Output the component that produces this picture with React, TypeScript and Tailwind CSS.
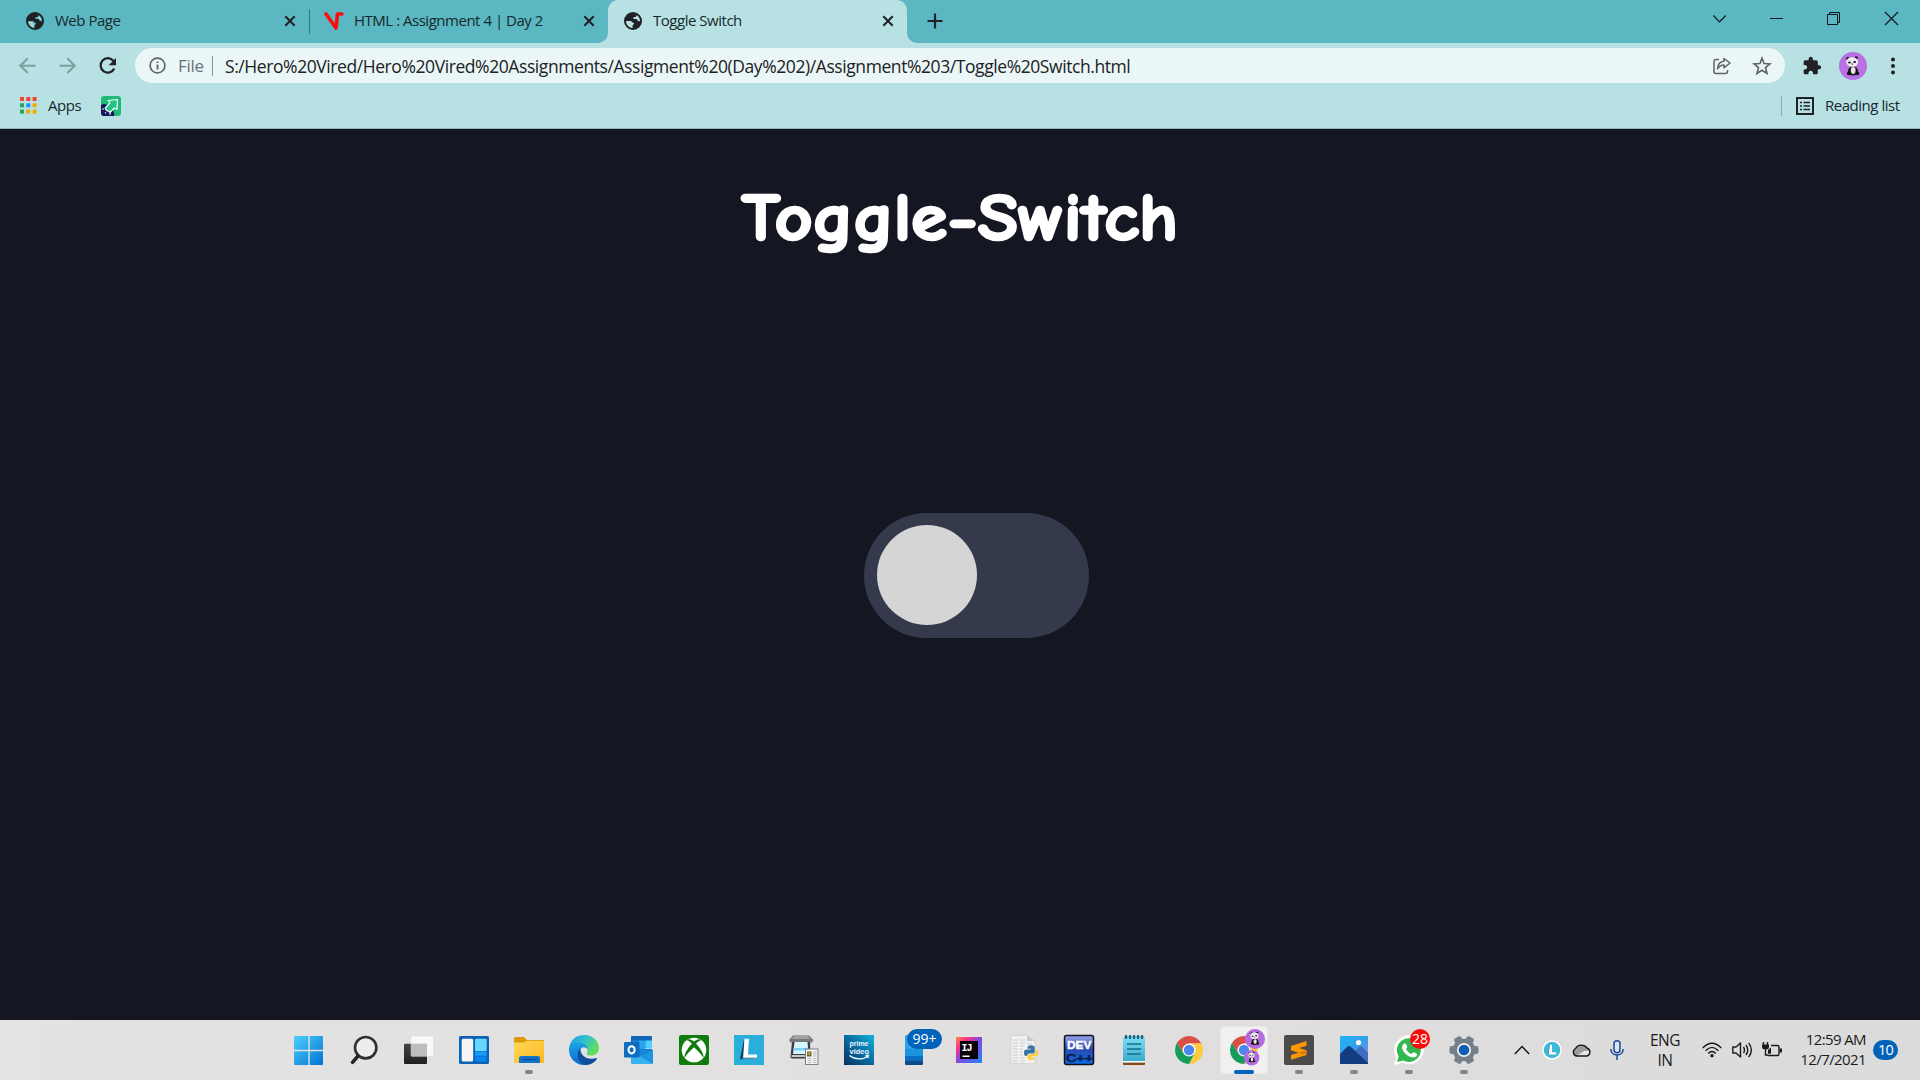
import React from "react";

type Kids = { children: React.ReactNode };

function Globe() {
  return (
    <svg width="18" height="18" viewBox="0 0 18 18" className="shrink-0">
      <circle cx="9" cy="9" r="8" fill="none" stroke="#202124" strokeWidth="2" />
      <path d="M9 1.500 C4 2 1 5 1.500 9 H6 C8.500 9 8 11 10 11 C10.500 12.500 8 12.500 8.500 15 L9.500 17 C14 16 17 13 16.500 9.500 L14 9 L12.500 7 H9.500 V5 H12 L13 2.500 Z" fill="#202124" />
      <path d="M2.500 10 H6 L8 12 V15.800 C5 15 3 13 2.500 10 Z M12.500 4 L15 6.200 L15.600 8 L13 7 L12 5.500 Z" fill="#b8e1e4" fillOpacity=".75" />
    </svg>
  );
}

function TabClose() {
  return (
    <svg width="12" height="12" viewBox="0 0 12 12" className="shrink-0">
      <path d="M1.300 1.300 L10.700 10.700 M10.700 1.300 L1.300 10.700" stroke="#202124" strokeWidth="2" />
    </svg>
  );
}

function PandaShapes() {
  return (
    <g>
      <ellipse cx="14" cy="19" rx="5" ry="4.500" fill="#16141a" />
      <ellipse cx="9.800" cy="21.500" rx="2" ry="1.700" fill="#16141a" />
      <ellipse cx="18.300" cy="21.500" rx="2" ry="1.700" fill="#16141a" />
      <ellipse cx="14.200" cy="18.500" rx="2.400" ry="3.400" fill="#e8e4e8" />
      <circle cx="8.800" cy="6.700" r="1.700" fill="#16141a" />
      <circle cx="17.200" cy="5.900" r="1.700" fill="#16141a" />
      <ellipse cx="13.200" cy="10" rx="6" ry="4.800" fill="#eeeaf0" />
      <ellipse cx="10.500" cy="10.500" rx="1.400" ry="1" fill="#16141a" />
      <ellipse cx="15.700" cy="9.900" rx="1.400" ry="1" fill="#16141a" />
      <circle cx="13.200" cy="12" r=".7" fill="#16141a" />
    </g>
  );
}

function ChromeShapes() {
  return (
    <g>
      <path d="M28 23.500 H40.400 L40.120 23 A14 14 0 0 0 15.880 23 L22.300 33.500 Z" fill="#d94f43" />
      <path d="M33.600 33.200 L28 44 A14 14 0 0 0 40.400 23.500 H28 Z" fill="#fdcb3e" />
      <path d="M22.300 33.300 L15.880 23 A14 14 0 0 0 28 44 L33.600 33.300 Z" fill="#159c5b" />
      <circle cx="28" cy="30" r="6.500" fill="#fff" />
      <circle cx="28" cy="30" r="5.200" fill="#4a86ee" />
    </g>
  );
}

function TaskIcon({ children, running, active }: { children: React.ReactNode; running?: boolean; active?: boolean }) {
  return (
    <div className="h-[60px] w-[55px] shrink-0">
      <svg width="60" height="60" viewBox="0 0 60 60" className="block max-w-none overflow-visible">
        {active && <rect x="4" y="6" width="48" height="48" rx="5" fill="#f1efef" stroke="#e5e1e1" />}
        {children}
        {running && <rect x="24" y="50" width="8" height="4" rx="2" fill="#858383" />}
        {active && <rect x="18" y="50" width="20" height="4" rx="2" fill="#0063b9" />}
      </svg>
    </div>
  );
}

const gearTeeth = [0, 60, 120, 180, 240, 300];
const notepadRings = [20, 24, 28, 32, 36];

function Gradients() {
  return (
    <svg width="0" height="0" className="absolute">
      <defs>
        <linearGradient id="win" x1="0" y1="0" x2="1" y2="1"><stop offset="0" stopColor="#4fd0fb" /><stop offset="1" stopColor="#0072d2" /></linearGradient>
        <linearGradient id="folder" x1="0" y1="0" x2="1" y2="1"><stop offset="0" stopColor="#ffd75e" /><stop offset="1" stopColor="#fcb91b" /></linearGradient>
        <linearGradient id="edgeTop" x1="0" y1="0" x2="1" y2=".5"><stop offset="0" stopColor="#1c9be0" /><stop offset=".5" stopColor="#2fbfd0" /><stop offset="1" stopColor="#62e058" /></linearGradient>
        <linearGradient id="edgeLow" x1="0" y1="0" x2="0" y2="1"><stop offset="0" stopColor="#1ea3e6" /><stop offset="1" stopColor="#0b6bc9" /></linearGradient>
        <linearGradient id="prime" x1="0" y1="1" x2="1" y2="0"><stop offset="0" stopColor="#07305f" /><stop offset=".6" stopColor="#0a78ab" /><stop offset="1" stopColor="#12b5dd" /></linearGradient>
        <linearGradient id="ij" x1="0" y1="0" x2="1" y2="1"><stop offset="0" stopColor="#fd8a3c" /><stop offset=".25" stopColor="#f9318a" /><stop offset=".5" stopColor="#7d4be0" /><stop offset="1" stopColor="#1f87fa" /></linearGradient>
        <linearGradient id="dev" x1="0" y1="0" x2="0" y2="1"><stop offset="0" stopColor="#9aa8ea" /><stop offset=".45" stopColor="#2b48b0" /><stop offset="1" stopColor="#0b6fe8" /></linearGradient>
        <linearGradient id="note" x1="0" y1="0" x2="0" y2="1"><stop offset="0" stopColor="#7edcef" /><stop offset="1" stopColor="#38a9cf" /></linearGradient>
        <linearGradient id="photo" x1="0" y1="0" x2="1" y2="1"><stop offset="0" stopColor="#1fb3f3" /><stop offset=".5" stopColor="#34a0ec" /><stop offset="1" stopColor="#a77ce0" /></linearGradient>
        <linearGradient id="dark" x1="0" y1="0" x2="0" y2="1"><stop offset="0" stopColor="#454545" /><stop offset="1" stopColor="#1f1f1f" /></linearGradient>
      </defs>
    </svg>
  );
}

function Taskbar() {
  return (
    <footer className="flex h-[60px] w-full shrink-0 items-center bg-gradient-to-r from-[#e3e3e3] via-[#e2dfdf] to-[#dbdbdb] pl-[281px] font-['Open_Sans',sans-serif] text-[#1b1b1b]">
      <TaskIcon>
        <path d="M14 16 H27.300 V29.800 H13 V17 Q13 16 14 16 Z M28.700 16 H41 Q42 16 42 17 V29.800 H28.700 Z M13 31.200 H27.300 V45 H14 Q13 45 13 44 Z M28.700 31.200 H42 V44 Q42 45 41 45 H28.700 Z" fill="url(#win)" />
      </TaskIcon>
      <TaskIcon>
        <circle cx="29.700" cy="27.700" r="10.700" fill="#ededed" stroke="#303030" strokeWidth="2.600" />
        <path d="M22 36 L16.500 42.300" stroke="#252525" strokeWidth="3.500" strokeLinecap="round" />
      </TaskIcon>
      <TaskIcon>
        <rect x="13" y="23.700" width="23" height="20.300" rx="1" fill="url(#dark)" />
        <rect x="20" y="16" width="22.500" height="20.200" rx="1" fill="#f8f8f8" stroke="#d8d8d8" strokeWidth=".5" />
        <rect x="20" y="23.700" width="16" height="12.500" fill="#bdbdbd" />
      </TaskIcon>
      <TaskIcon>
        <rect x="13" y="16" width="30" height="28" rx="1.500" fill="#0c62b5" />
        <rect x="15.700" y="18.700" width="11.500" height="22.800" rx="1.500" fill="#f4f4f4" />
        <rect x="29" y="18.700" width="11.700" height="12.300" rx="1" fill="#66d7ff" />
        <rect x="29" y="31.500" width="11.700" height="4.300" fill="#189cf5" />
        <rect x="29" y="36.300" width="11.700" height="5.200" rx="1" fill="#0a85ea" />
      </TaskIcon>
      <TaskIcon running>
        <path d="M13 18 Q13 17 14 17 H23 L26 20 H43 V26 H13 Z" fill="#dc9a06" />
        <path d="M13 22.500 H23 L26 20.700 H43 V42 Q43 43 42 43 H14 Q13 43 13 42 Z" fill="url(#folder)" />
        <path d="M18 43 V38 Q18 36 20 36 H37 Q39 36 39 38 V43 Z" fill="#1173c8" />
        <path d="M22 39.500 H35.500" stroke="#0a4c8f" strokeWidth="1.300" />
      </TaskIcon>
      <TaskIcon>
        <path d="M13 29 C14 20 20 15 28 15 C37 15 43 21 43 28 C43 33 39 35.500 35 35.500 C32 35.500 30 34.500 31 33 C32.500 30.500 31 26 26.500 24 C21 21.500 15 24 13 29 Z" fill="url(#edgeTop)" />
        <path d="M13 30 C13 25 17 22.200 22 22.200 C28 22.200 32 26 31.800 30 C31 27.500 27 26 24.500 29 C21.500 33 24.500 42.500 32 44.500 C22 47.500 13 39 13 30 Z" fill="url(#edgeLow)" />
        <path d="M24.500 28.500 C20 31 20.500 44 30 45 C35 45 39.500 42 41 38.500 C41 37 38 38.700 35 38.700 C29 38.700 24 34 24.500 28.500 Z" fill="#0d4f9c" />
      </TaskIcon>
      <TaskIcon>
        <path d="M20 17 Q20 16 21 16 H40 Q41 16 41 17 V28 H20 Z" fill="#1066b5" />
        <rect x="21" y="20.500" width="7" height="11" fill="#1684d8" />
        <rect x="28" y="20.500" width="6.500" height="9" fill="#2ba5ec" />
        <rect x="34.500" y="20.500" width="6.500" height="8" fill="#50d0ff" />
        <path d="M20 29 H41 L42 31 V42.500 Q42 44 40.500 44 H22 Q20 44 20 42 Z" fill="#1684d8" />
        <path d="M20 31 L42 43.500 Q41.500 44 40.500 44 H22 Q20 44 20 42 Z" fill="#35b2f2" />
        <path d="M29 36 L42 30.500 V42 Z" fill="#1f94e0" />
        <rect x="13" y="22" width="15.500" height="15.500" rx="1.300" fill="#0f6cbd" />
        <ellipse cx="20.600" cy="29.800" rx="3.100" ry="3.600" fill="none" stroke="#fff" strokeWidth="2" />
      </TaskIcon>
      <TaskIcon>
        <rect x="13" y="15" width="30" height="30" rx="2" fill="#107c10" />
        <circle cx="28" cy="30" r="12.300" fill="#fff" />
        <path d="M20.500 20.200 C23 18 26 20 28 21.400 C30 20 33 18 35.500 20.200 C34 20 31.500 22 30 23.700 C34 27.500 38 34 37.600 38 C35 34 31.500 30.500 28 27.300 C24.500 30.500 21 34 18.400 38 C18 34 22 27.500 26 23.700 C24.500 22 22 20 20.500 20.200 Z" fill="#107c10" />
      </TaskIcon>
      <TaskIcon>
        <rect x="13" y="15" width="30" height="30" fill="#2aafda" />
        <path d="M23 19 L19 39.500 L24 37 Z" fill="#0d3b70" />
        <path d="M23.500 18.800 H28 L27 34.500 H36 V38.500 H22 Z" fill="#fff" />
        <path d="M19 39.500 L22 37.500 H36 L35.500 38.800 Z" fill="#0d3b70" fillOpacity=".5" />
      </TaskIcon>
      <TaskIcon>
        <path d="M17 15.500 H33 L37.500 20 L36 22.500 H14.500 L13 20 Z" fill="#77797a" />
        <path d="M18.500 15.500 H31.500 L34 19 H16 Z" fill="#a2a2a2" />
        <path d="M16 22 H34 L34.500 36.500 Q34.500 38.500 33 38.500 H16 Q14.300 38.500 14.500 36.500 Z" fill="#3a3e41" />
        <path d="M18.500 22 H31.500 L32.500 34 H17 Z" fill="#d6f6ff" />
        <path d="M17.500 28 H32 V30.500 H17.500 Z" fill="#7fd4f2" />
        <path d="M15.500 35 H34 V37 H15.500 Z" fill="#c6c9cb" />
        <rect x="29.500" y="29" width="12.500" height="15.500" fill="#f4f4f1" stroke="#74828c" />
        <rect x="31" y="31.500" width="4.500" height="5" fill="#416e35" />
        <circle cx="33" cy="33.500" r="1.700" fill="#e17b22" />
        <path d="M37 32 H40.500 M37 34 H40.500 M37 36 H40.500 M31.500 38.500 H35.500 M37 38.500 H40.500 M31.500 40.500 H35.500 M37 40.500 H40.500 M31.500 42.500 H35.500 M37 42.500 H40.500" stroke="#b9b9b9" />
      </TaskIcon>
      <TaskIcon>
        <rect x="13" y="15" width="30" height="30" fill="url(#prime)" />
        <g fontFamily="Liberation Sans, sans-serif" fontSize="6.800" fontWeight="700" fill="#e9f7ff">
          <text x="18.500" y="25.500" textLength="19" lengthAdjust="spacingAndGlyphs">prime</text>
          <text x="18.500" y="33.500" textLength="19.500" lengthAdjust="spacingAndGlyphs">video</text>
        </g>
        <path d="M18.500 35.500 C24 40 32 40 37 36 M34.500 35.500 L37.500 35.300 L36.800 38" fill="none" stroke="#e9f7ff" strokeWidth="1.300" />
      </TaskIcon>
      <TaskIcon>
        <rect x="19" y="15" width="18" height="30" rx="1.500" fill="#2aa6e6" />
        <rect x="19" y="29" width="18" height="7" fill="#1c93dd" />
        <rect x="19" y="36" width="18" height="4.500" fill="#0a6fc4" />
        <path d="M19 40.500 H37 V43.500 Q37 45 35.500 45 H20.500 Q19 45 19 43.500 Z" fill="#0b4a86" />
        <rect x="21" y="9" width="35" height="20" rx="10" fill="#0063b9" />
        <text x="38.500" y="24" textAnchor="middle" fontSize="14" fill="#fff" textLength="24" lengthAdjust="spacingAndGlyphs">99+</text>
      </TaskIcon>
      <TaskIcon>
        <rect x="15" y="17" width="26" height="26" fill="url(#ij)" />
        <rect x="19" y="21" width="18" height="18" fill="#08020a" />
        <text x="20.500" y="30.500" fontSize="10" fontWeight="700" fill="#fff" fontFamily="Liberation Mono, monospace" textLength="11">IJ</text>
        <rect x="21.500" y="35.500" width="7" height="1.500" fill="#fff" />
      </TaskIcon>
      <TaskIcon>
        <path d="M15 15.500 H31 L39 21 V44 L15 43 Z" fill="#f1f1f1" stroke="#d2d2d2" />
        <path d="M31 15.500 V21 H39 Z" fill="#c9c9c9" />
        <path d="M17 20 H22 M24 20 H29 M17 23 H22 M24 23 H29 M31 24 H36 M17 26 H22 M24 26 H28 M17 29 H22 M24 29 H27 M17 32 H22 M24 32 H26 M17 35 H22 M24 35 H27 M17 38 H22 M24 38 H29 M17 41 H22 M24 41 H29" stroke="#cbcbcb" />
        <path d="M31.500 28 Q31.500 25.300 35 25.300 Q38.700 25.300 38.700 28 V32 Q38.700 33.500 37 33.500 H33 Q31 33.500 31 36 H30 Q28 36 28 32.500 Q28 29.500 30.500 29.500 H35 V28.800 H31.500 Z" fill="#3672a4" />
        <path d="M38.500 37.500 Q38.500 40.300 35 40.300 Q31.500 40.300 31.500 37.500 V35.500 Q31.500 34.300 33 34.300 H37 Q39.500 34.300 39.500 31.500 V30 H40.500 Q42.500 30.500 42.300 33.500 Q42.300 36.300 40 36.300 H35.500 V37.500 Z" fill="#fdd03b" />
      </TaskIcon>
      <TaskIcon>
        <rect x="13.500" y="15.500" width="29" height="29" rx="2" fill="url(#dev)" stroke="#10131f" strokeWidth="1.500" />
        <g fontFamily="Liberation Sans, sans-serif" fontSize="11.400" fontWeight="700">
          <text x="16" y="28.500" fill="#fff" stroke="#fff" strokeWidth=".4" textLength="24.500" lengthAdjust="spacingAndGlyphs">DEV</text>
          <text x="15" y="41.700" fill="#0b2352" stroke="#0b2352" strokeWidth=".6" textLength="27" lengthAdjust="spacingAndGlyphs">C++</text>
        </g>
      </TaskIcon>
      <TaskIcon>
        <path d="M17 42 H39 V44 Q39 45 38 45 H18 Q17 45 17 44 Z" fill="#8b4a12" />
        <rect x="17" y="17" width="22" height="25.500" rx="1" fill="url(#note)" />
        <rect x="17" y="41" width="22" height="1.500" fill="#fff" />
        {notepadRings.map((x) => (
          <rect key={x} x={x - 1.2} y="15" width="2.500" height="4" rx="1.200" fill="#0e5f7e" />
        ))}
        <path d="M21 24 H35 M21 29 H35 M21 34 H35" stroke="#10708f" strokeWidth="1.700" />
      </TaskIcon>
      <TaskIcon><ChromeShapes /></TaskIcon>
      <TaskIcon active>
        <ChromeShapes />
        <circle cx="39" cy="19" r="10" fill="#b36be0" />
        <g transform="translate(29.500 9) scale(.68)"><PandaShapes /></g>
        <circle cx="35.700" cy="37.700" r="7.700" fill="#b36be0" />
        <g transform="translate(28.500 29.800) scale(.53)"><PandaShapes /></g>
      </TaskIcon>
      <TaskIcon running>
        <rect x="13" y="15" width="30" height="30" rx="2" fill="#4b4b4b" />
        <path d="M20 26 L35.500 21 V25.700 L28 28 L35.500 30.300 V35 L20 39.700 V35 L27.500 32.700 L20 30.300 Z" fill="#ff9800" />
        <path d="M27.500 32.700 L35.500 30.300 V33 L31 34.500 Z" fill="#d97b06" />
      </TaskIcon>
      <TaskIcon running>
        <rect x="14" y="16" width="28" height="28" rx="1" fill="url(#photo)" />
        <path d="M28 32 L33 27 Q34.500 25.500 36 27 L42 33 V44 H31 Z" fill="#3f6dc1" />
        <path d="M14 34 L21.500 26.500 Q23 25.300 24.500 26.500 L42 43 V44 H14 Z" fill="#123d80" />
        <circle cx="32.500" cy="22.500" r="2.600" fill="#fff" />
      </TaskIcon>
      <TaskIcon running>
        <path d="M13 45 L15.200 37 A14.800 14.500 0 1 1 21.500 42.800 Z" fill="#fff" />
        <path d="M16 42 L17.700 36.500 A12 11.900 0 1 1 22 40.500 Z" fill="#33b850" />
        <path d="M22.500 24 Q24 22.500 25 24 L26.300 27 Q26.300 28 25 29 Q27 33 30.500 34 Q32 32 33 32.300 L36 34 Q36.500 37 32.500 37.500 C27 37.500 20.500 31 21 26.500 Z" fill="#fff" />
        <circle cx="39" cy="19" r="10" fill="#fb0a0a" />
        <text x="39" y="24.300" textAnchor="middle" fontSize="14" fill="#fff" textLength="16" lengthAdjust="spacingAndGlyphs">28</text>
      </TaskIcon>
      <TaskIcon running>
        {gearTeeth.map((a) => (
          <rect key={a} x="24" y="15.500" width="8" height="10" rx="2.200" fill="#76808a" transform={`rotate(${a + 30} 28 30)`} />
        ))}
        <circle cx="28" cy="30" r="11.300" fill="#76808a" />
        <circle cx="28" cy="30" r="7" fill="#f2f2f2" />
        <circle cx="28" cy="30" r="5.300" fill="#0d5fb4" />
      </TaskIcon>

      <div className="ml-[23px] flex h-full items-center">
        <svg width="16" height="10" viewBox="0 0 16 10"><path d="M.8 9 L8 1.500 L15.200 9" fill="none" stroke="#1b1b1b" strokeWidth="1.500" /></svg>
        <svg width="20" height="20" viewBox="0 0 20 20" className="ml-[12px]">
          <circle cx="10" cy="10" r="9" fill="#3fb9d8" stroke="#fff" strokeWidth="1.500" />
          <path d="M8 4.500 L6 14.500 L9 14 Z" fill="#0e4f8a" />
          <path d="M8 4.800 H10 V12.300 H14 V14.500 H6.500 Z" fill="#fff" />
        </svg>
        <svg width="20" height="16" viewBox="0 0 20 16" className="ml-[10px]">
          <path d="M5 14 A4 4 0 0 1 3.500 6.500 A6.500 5.800 0 0 1 15 6 A4.200 4.200 0 0 1 15 14 Z" fill="#9b9b9b" />
          <path d="M4.500 14 L12 9 L18 8.500 Q19.500 13.500 15 14 Z" fill="#e5e5e5" />
          <path d="M5 14 A4 4 0 0 1 3.500 6.500 A6.500 5.800 0 0 1 15 6 A4.200 4.200 0 0 1 15 14 Z" fill="none" stroke="#1b1b1b" strokeWidth="1.400" />
        </svg>
        <svg width="14" height="20" viewBox="0 0 14 20" className="ml-[18px]">
          <rect x="4" y=".8" width="6" height="12" rx="3" fill="#d7e3f3" stroke="#1b4a96" strokeWidth="1.500" />
          <path d="M.8 9 C.8 17 13.200 17 13.200 9 M7 15 V20" fill="none" stroke="#1b4a96" strokeWidth="1.500" />
        </svg>
        <div className="mb-px ml-[17px] flex w-[48px] flex-col items-center text-[15.500px] leading-5 tracking-[-0.6px]">
          <span>ENG</span>
          <span>IN</span>
        </div>
        <svg width="20" height="16" viewBox="0 0 20 16" className="ml-[13px]">
          <path d="M.7 6 Q10 -3.500 19.300 6 M3.600 8.800 Q10 2 16.400 8.800 M6.300 11.500 Q10 7.500 13.700 11.500" fill="none" stroke="#1b1b1b" strokeWidth="1.400" />
          <circle cx="10" cy="13.800" r="1.700" fill="#1b1b1b" />
        </svg>
        <svg width="21" height="18" viewBox="0 0 21 18" className="ml-[10px]">
          <path d="M.8 6 H4 L8.500 2 V16 L4 12 H.8 Z M11.500 6 Q13.500 9 11.500 12 M14 4 Q17.500 9 14 14 M16.700 1.800 Q22 9 16.700 16.200" fill="none" stroke="#1b1b1b" strokeWidth="1.400" strokeLinejoin="round" />
        </svg>
        <svg width="20" height="18" viewBox="0 0 20 18" className="ml-[9px]">
          <path d="M1.500 1 V4 M5.500 1 V4 M3.500 7 V14 H6" fill="none" stroke="#1b1b1b" strokeWidth="1.400" />
          <path d="M0 3.500 H7 V6 Q7 8.500 3.500 8.500 Q0 8.500 0 6 Z" fill="#1b1b1b" />
          <path d="M9 4.500 H15.500 Q17 4.500 17 6 V13 Q17 14.500 15.500 14.500 H5.500" fill="none" stroke="#1b1b1b" strokeWidth="1.400" />
          <path d="M6 9 L9 6.500 V12.700 H6 Z" fill="#1b1b1b" />
          <path d="M17.500 7.500 H20 V11.500 H17.500 Z" fill="#1b1b1b" />
        </svg>
        <div className="mb-[2px] ml-[10px] flex w-[74px] flex-col items-end whitespace-nowrap text-[15px] leading-5 tracking-[-0.6px]">
          <span>12:59 AM</span>
          <span>12/7/2021</span>
        </div>
        <div className="ml-[7px] flex h-5 w-[25px] items-center justify-center rounded-full bg-[#0063b9] text-[14.500px] leading-5 tracking-[-0.8px] text-white">10</div>
      </div>
    </footer>
  );
}

function Label({ children }: Kids) {
  return <span className="block whitespace-nowrap pb-[2px] text-[15px] leading-5 tracking-[-0.48px] text-[#16292c]">{children}</span>;
}

function TabStrip() {
  return (
    <div className="flex h-[43px] w-full bg-[#5bb7c1]">
      <div className="flex w-[309px] items-center pb-px pl-[26px] pr-[13px]">
        <Globe />
        <div className="ml-[11px] flex-1"><Label>Web Page</Label></div>
        <TabClose />
      </div>
      <div className="mt-[9px] h-[25px] w-px bg-[#33757d]" />
      <div className="flex w-[298px] items-center pb-px pl-[14px] pr-[13px]">
        <svg width="20" height="18" viewBox="0 0 20 18" className="shrink-0">
          <path d="M2 2 L12 16 L13.500 2 H18" fill="none" stroke="#fb0d0d" strokeWidth="3.600" strokeLinecap="round" strokeLinejoin="round" />
        </svg>
        <div className="ml-[10px] flex-1"><Label>HTML : Assignment 4 | Day 2</Label></div>
        <TabClose />
      </div>
      <div className="relative flex w-[299px] items-center rounded-t-[10px] bg-[#b8e1e4] pb-px pl-[16px] pr-[13px]">
        <svg width="10" height="10" viewBox="0 0 10 10" className="absolute -left-[10px] bottom-0"><path d="M10 0 V10 H0 A10 10 0 0 0 10 0 Z" fill="#b8e1e4" /></svg>
        <svg width="10" height="10" viewBox="0 0 10 10" className="absolute -right-[10px] bottom-0"><path d="M0 0 V10 H10 A10 10 0 0 1 0 0 Z" fill="#b8e1e4" /></svg>
        <Globe />
        <div className="ml-[11px] flex-1"><Label>Toggle Switch</Label></div>
        <TabClose />
      </div>
      <svg width="16" height="16" viewBox="0 0 16 16" className="ml-[20px] mt-[13px]">
        <path d="M8 .5 V15.500 M.5 8 H15.500" stroke="#202124" strokeWidth="2.200" />
      </svg>
      <svg width="200" height="16" viewBox="1713 11 200 16" className="ml-auto mr-[7px] mt-[11px]" fill="none" stroke="#101718">
        <path d="M1713.300 15.500 L1719.500 21.800 L1725.700 15.500" strokeWidth="1.200" />
        <path d="M1770 18.500 H1783" />
        <path d="M1827.500 14.500 H1837.500 V24.500 H1827.500 Z M1829.500 14.500 V12.500 H1839.500 V22.500 H1837.500" />
        <path d="M1885 12 L1898 25 M1898 12 L1885 25" strokeWidth="1.200" />
      </svg>
    </div>
  );
}

function Toolbar() {
  return (
    <div className="flex h-[45px] w-full items-center bg-[#b8e1e4]">
      <svg width="100" height="20" viewBox="18 55 100 20" className="ml-[18px] shrink-0" fill="none">
        <path d="M35.500 64.700 H20.500 M27.800 57.300 L20.300 64.700 L27.800 72" stroke="#7f9ea1" strokeWidth="2" />
        <path d="M59.500 64.700 H74.500 M67.300 57.300 L74.800 64.700 L67.300 72" stroke="#7f9ea1" strokeWidth="2" />
        <path d="M113.500 60 A7.200 7.200 0 1 0 114.300 67.500" stroke="#202124" strokeWidth="2.200" />
        <path d="M116 57 V64.300 H108.700 Z" fill="#202124" />
      </svg>
      <div className="ml-[17px] flex h-[35px] w-[1650px] shrink-0 items-center rounded-full bg-[#ebf7f7] pl-[14px] pr-[12px]">
        <svg width="17" height="17" viewBox="0 0 17 17">
          <circle cx="8.500" cy="8.500" r="7.400" fill="none" stroke="#5f6568" strokeWidth="1.700" />
          <path d="M8.500 7.500 V12.500 M8.500 4.400 V6.100" stroke="#5f6568" strokeWidth="1.800" />
        </svg>
        <span className="ml-[12px] w-[26px] whitespace-nowrap text-[17px] leading-6 tracking-[-0.3px] text-[#66707a]">File</span>
        <div className="ml-[8px] h-5 w-px bg-[#8b9496]" />
        <span className="ml-[12px] flex-1 whitespace-nowrap text-[17.500px] leading-6 tracking-[-0.42px] text-[#202124]">
          S:/Hero%20Vired/Hero%20Vired%20Assignments/Assigment%20(Day%202)/Assignment%203/Toggle%20Switch.html
        </span>
        <svg width="18" height="18" viewBox="0 0 18 18" fill="none" stroke="#5f6568" strokeWidth="1.500">
          <path d="M6 2.500 H3 Q1 2.500 1 4.500 V14.500 Q1 16.500 3 16.500 H12.500 Q14.500 16.500 14.500 14.500 V13" />
          <path d="M11 1.500 L17 6 L11 10.800 V8 Q7 8 4.500 11.800 Q5 4.800 11 4.300 Z" strokeLinejoin="round" />
        </svg>
        <svg width="20" height="20" viewBox="0 0 24 24" className="ml-[21px] mr-px">
          <path d="M12 2.800 L14.500 9 L21.500 9.500 L16.200 14 L18 21 L12 17.200 L6 21 L7.800 14 L2.500 9.500 L9.500 9 Z" fill="none" stroke="#5f6568" strokeWidth="2" />
        </svg>
      </div>
      <svg width="20" height="20" viewBox="0 0 24 24" className="ml-[17px] shrink-0">
        <path d="M20.500 11 H19 V7 c0-1.100-.9-2-2-2 h-4 V3.500 C13 2.120 11.880 1 10.500 1 S8 2.120 8 3.500 V5 H4 c-1.100 0-2 .9-2 2 v3.800 h1.500 c1.490 0 2.700 1.210 2.700 2.700 s-1.210 2.700-2.700 2.700 H2 V20 c0 1.100.9 2 2 2 h3.800 v-1.500 c0-1.490 1.210-2.700 2.700-2.700 s2.700 1.210 2.700 2.700 V22 H17 c1.100 0 2-.9 2-2 v-4 h1.500 c1.380 0 2.500-1.120 2.500-2.500 S21.880 11 20.500 11 z" fill="#202124" />
      </svg>
      <svg width="28" height="28" viewBox="0 0 28 28" className="ml-[17px] shrink-0">
        <circle cx="14" cy="14" r="14" fill="#b870e2" />
        <PandaShapes />
      </svg>
      <svg width="6" height="18" viewBox="0 0 6 18" className="ml-[23px] shrink-0" fill="#202124">
        <circle cx="3" cy="2.500" r="2" /><circle cx="3" cy="9" r="2" /><circle cx="3" cy="15.500" r="2" />
      </svg>
    </div>
  );
}

const appDots = [
  ["#f04438", "#f04438", "#f04438"],
  ["#26a65b", "#2391f5", "#f5a800"],
  ["#26a65b", "#f5a800", "#f5a800"],
];

function Bookmarks() {
  return (
    <div className="flex h-[41px] w-full items-center border-b border-[#8fb4b7] bg-[#b8e1e4] pb-[5px] pl-[20px] pr-[18px]">
      <svg width="17" height="17" viewBox="0 0 17 17">
        {appDots.map((row, r) => row.map((c, i) => <rect key={`${r}-${i}`} x={i * 6.3} y={r * 6.3} width="4" height="4" fill={c} />))}
      </svg>
      <div className="ml-[11px] w-[53px]"><Label>Apps</Label></div>
      <svg width="20" height="20" viewBox="0 0 20 20">
        <rect width="20" height="20" rx="3" fill="#1fb978" />
        <path d="M0 9 Q4 6 9 11 Q14 15 13 20 H3 Q0 20 0 17 Z" fill="#17145c" />
        <path d="M7 4.500 L16.500 3.500 L16 13.500 L13.300 12 L9 16.500 L7.500 15 Q5 15 4.200 12 L9 7 Z" fill="#20c486" stroke="#f2fffa" strokeWidth="1.200" strokeLinejoin="round" />
        <path d="M2 12 V14 M4 16 L5 17.500 M8 18 H10" stroke="#fff" />
      </svg>
      <div className="ml-auto mr-[14px] h-5 w-px bg-[#86abb0]" />
      <svg width="18" height="18" viewBox="0 0 18 18" className="mr-[11px]">
        <rect x="1" y="1" width="16" height="16" fill="none" stroke="#202124" strokeWidth="2" />
        <path d="M4 5.500 H6 M4 9 H6 M4 12.500 H6 M7.500 5.500 H14 M7.500 9 H14 M7.500 12.500 H14" stroke="#202124" strokeWidth="1.700" />
      </svg>
      <div className="w-[77px]"><Label>Reading list</Label></div>
    </div>
  );
}

export default function App() {
  return (
    <div className="flex h-[1080px] w-[1920px] flex-col overflow-hidden bg-[#141622] font-['Open_Sans',sans-serif]">
      <Gradients />
      <TabStrip />
      <Toolbar />
      <Bookmarks />
      <main className="flex flex-1 flex-col items-center">
        <h1 className="mt-[45px] scale-x-[1.12] whitespace-nowrap font-['Comic_Sans_MS','Comic_Neue',cursive] text-[66px] font-bold leading-[90px] text-white [-webkit-text-stroke:2.5px_white]">Toggle-Switch</h1>
        <div className="ml-[33px] mt-[249px] flex h-[125px] w-[225px] rounded-full bg-[#34394b] pl-[13px] pt-3">
          <div className="size-[100px] rounded-full bg-[#d5d5d5]" />
        </div>
      </main>
      <Taskbar />
    </div>
  );
}
